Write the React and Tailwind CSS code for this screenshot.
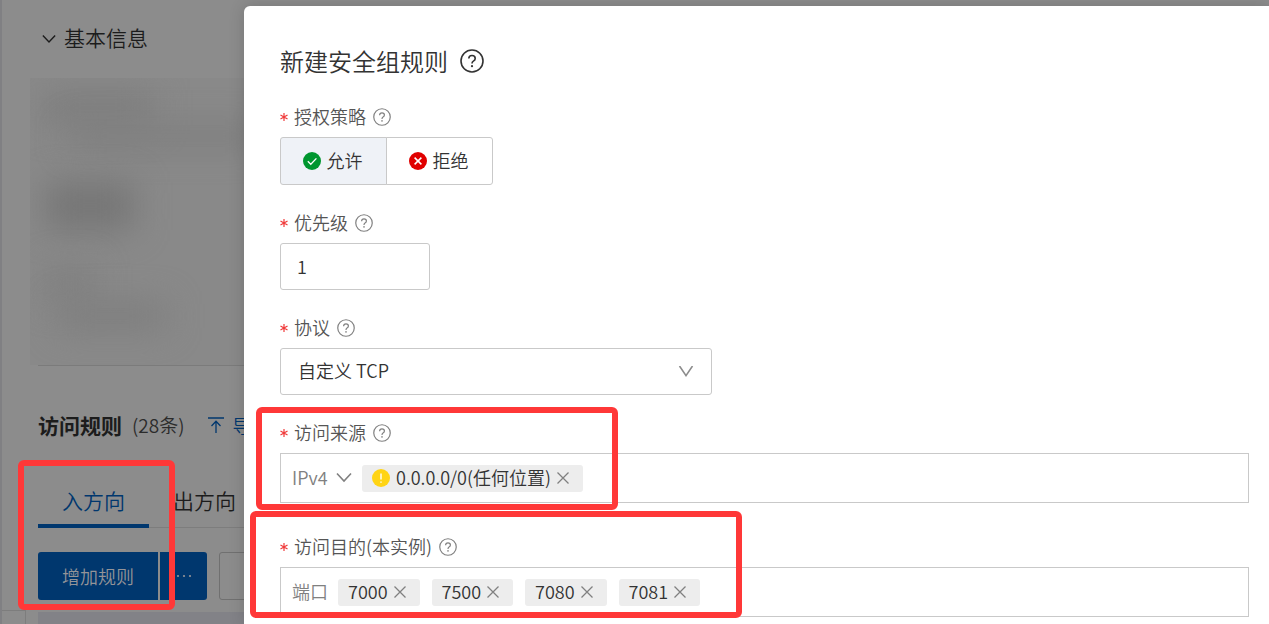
import React, { useState } from "react";

function HelpIcon({ className }) {
  return (
    <svg viewBox="0 0 24 24" fill="none" stroke="currentColor" strokeWidth="1.6" className={className} aria-hidden="true">
      <circle cx="12" cy="12" r="11" />
      <path d="M8.8 9.6c0-1.8 1.4-3.1 3.2-3.1s3.2 1.2 3.2 2.9c0 1.3-.8 2.1-1.8 2.7-1 .6-1.4 1.2-1.4 2.4" />
      <circle cx="12" cy="17.2" r="1.1" fill="currentColor" stroke="none" />
    </svg>
  );
}

function Chevron({ className, d = "M1 1.5 8 9 15 1.5" }) {
  return (
    <svg viewBox="0 0 16 11" fill="none" stroke="currentColor" strokeWidth="1.6" className={className} aria-hidden="true">
      <path d={d} />
    </svg>
  );
}

function CheckBadge() {
  return (
    <svg viewBox="0 0 18 18" className="size-[18px]" aria-hidden="true">
      <circle cx="9" cy="9" r="9" fill="#00962f" />
      <path d="M4.8 9.2 7.8 12.2 13.4 6.4" fill="none" stroke="#fff" strokeWidth="1.3" />
    </svg>
  );
}

function CrossBadge() {
  return (
    <svg viewBox="0 0 18 18" className="size-[18px]" aria-hidden="true">
      <circle cx="9" cy="9" r="9" fill="#e00000" />
      <path d="M5.6 5.6 12.4 12.4M12.4 5.6 5.6 12.4" fill="none" stroke="#fff" strokeWidth="1.5" />
    </svg>
  );
}

function WarnBadge() {
  return (
    <svg viewBox="0 0 18 18" className="size-[18px]" aria-hidden="true">
      <circle cx="9" cy="9" r="9" fill="#ffd414" />
      <path d="M9 4.4v6.2M9 12.4v1.4" stroke="#fff" strokeWidth="1.4" />
    </svg>
  );
}

function Marker({ className }) {
  return <div className={`pointer-events-none absolute z-10 rounded-md border-6 border-[#ff3838] ${className}`} />;
}

function Label({ htmlFor, id, children }) {
  return (
    <div className="mb-2 flex h-6 items-center text-[18px] leading-6 text-[#555]">
      <svg viewBox="0 0 10 10" className="mr-1.5 size-2 shrink-0 text-[#f03b3b]" fill="none" stroke="currentColor" strokeWidth="1.5" aria-hidden="true">
        <path d="M5 0v10M.6 2.5l8.8 5M9.4 2.5l-8.8 5" />
      </svg>
      <label id={id} htmlFor={htmlFor} className="pb-0.5">{children}</label>
      <HelpIcon className="ml-[7px] size-[18px] text-[#808080]" />
    </div>
  );
}

function Tag({ children, icon, label, onRemove }) {
  return (
    <span className="flex h-[27px] shrink-0 items-center gap-1.5 rounded-[3px] bg-[#ededed] pr-3.5 pl-2.5 text-[18px] leading-6 text-[#333]">
      {icon}
      <span className="pb-0.5">{children}</span>
      <button type="button" aria-label={`删除 ${label}`} onClick={onRemove} className="text-[#808080]">
        <svg viewBox="0 0 12 12" className="size-3" fill="none" stroke="currentColor" strokeWidth="1.3" aria-hidden="true">
          <path d="M.5.5 11.5 11.5M11.5.5.5 11.5" />
        </svg>
      </button>
    </span>
  );
}

function Background() {
  return (
    <section className="relative w-61 shrink-0 overflow-hidden border-l-2 border-[#808083] text-[#1c1c1c]">
      <div className="flex h-[78px] items-center pl-9">
        <h2>
          <button type="button" className="flex items-center gap-2 pl-1 text-[21px] leading-8">
            <Chevron className="h-2.5 w-3.5" />
            <span className="pb-1">基本信息</span>
          </button>
        </h2>
      </div>

      <div className="ml-7 h-[287px] overflow-hidden bg-[#898989] pt-3">
        <div className="ml-3 h-9 w-28 bg-[#7f7f7f] blur-lg" />
        <div className="ml-10 h-5 w-48 bg-[#7d7d7d] blur-lg" />
        <div className="mt-9 ml-4 h-12 w-22 bg-[#767676] blur-lg" />
        <div className="mt-9 ml-4 h-9 w-12 bg-[#808080] blur-lg" />
        <div className="ml-7 h-7 w-27 bg-[#7e7e7e] blur-lg" />
      </div>

      <div className="ml-9 border-t border-[#7b7b7b]">
        <div className="flex h-30 items-center pb-0.5 whitespace-nowrap">
          <h2 className="text-[21px] leading-8 font-bold">访问规则</h2>
          <span className="ml-2.5 text-[19px] text-[#2b2b2b]">(28条)</span>
          <a href="#import" className="ml-6 flex items-center gap-2 text-[18px] text-[#00376e]">
            <svg viewBox="0 0 16 16" className="size-4" fill="none" stroke="currentColor" strokeWidth="1.3" aria-hidden="true">
              <path d="M0 1h16M8 16V4.5M3.5 9 8 4.3 12.5 9" />
            </svg>
            导入
          </a>
        </div>

        <div role="tablist" className="flex h-[42px] border-b border-[#7d7d7d] whitespace-nowrap text-[21px] leading-7">
          <button type="button" role="tab" aria-selected="true" className="-mb-px flex border-b-4 border-[#00376e] px-6 text-[#00376e]">入方向</button>
          <button type="button" role="tab" aria-selected="false" className="flex px-6">出方向</button>
        </div>

        <div className="mt-6 flex h-12 text-[18px] whitespace-nowrap text-[#949498]">
          <button type="button" className="shrink-0 rounded-l-[3px] bg-[#00376e] px-6">增加规则</button>
          <button type="button" aria-label="更多" className="ml-0.5 flex w-[47px] shrink-0 items-center justify-center rounded-r-[3px] bg-[#00376e]">
            <svg viewBox="0 0 16 4" className="h-1 w-4" fill="currentColor" aria-hidden="true">
              <circle cx="2" cy="2" r="1.1" /><circle cx="8" cy="2" r="1.1" /><circle cx="14" cy="2" r="1.1" />
            </svg>
          </button>
          <button type="button" aria-label="快速添加" className="ml-3 w-30 shrink-0 rounded-[3px] border border-[#707070]" />
        </div>
      </div>

      <div className="flex">
        <div className="mt-2.5 h-3.5 w-6 shrink-0 border-t border-r border-[#7d7d7d]" />
        <div className="mt-3 ml-3 h-3 grow bg-[#828287]" />
      </div>

      <Marker className="top-[460px] left-4 h-[150px] w-[157px]" />
    </section>
  );
}

function Choice({ checked, value, onChange, icon, children, className }) {
  return (
    <label className={`flex w-[107px] cursor-pointer items-center justify-center gap-1.5 border border-[#c9c9c9] pr-0.5 text-[18px] leading-6 text-[#333] ${checked ? "bg-[#eff2f7]" : "bg-white"} ${className}`}>
      <input type="radio" name="policy" value={value} checked={checked} onChange={onChange} className="sr-only" />
      {icon}
      <span className="pb-0.5">{children}</span>
    </label>
  );
}

export default function App() {
  const [policy, setPolicy] = useState("allow");
  const [priority, setPriority] = useState("1");
  const [ports, setPorts] = useState(["7000", "7500", "7080", "7081"]);
  const [sources, setSources] = useState(["0.0.0.0/0(任何位置)"]);

  return (
    <div className="flex h-screen overflow-hidden bg-[#8c8c8c] font-['Noto_Sans_CJK_SC',sans-serif] font-[350]">
      <Background />

      <main className="relative mt-1.5 min-w-0 grow rounded-tl-md bg-white pt-[37px] pr-5 pl-9 shadow-[0_0_16px_rgba(0,0,0,0.16)]">
        <div className="mb-[26px] flex h-9 items-center gap-3 text-[#333]">
          <h1 className="text-2xl leading-9">新建安全组规则</h1>
          <HelpIcon className="size-6" />
        </div>

        <form className="flex flex-col gap-[26px]" onSubmit={(e) => e.preventDefault()}>
          <div>
            <Label id="policy-label">授权策略</Label>
            <div role="radiogroup" aria-labelledby="policy-label" className="flex h-12">
              <Choice value="allow" checked={policy === "allow"} onChange={() => setPolicy("allow")} icon={<CheckBadge />} className="rounded-l-[3px]">允许</Choice>
              <Choice value="deny" checked={policy === "deny"} onChange={() => setPolicy("deny")} icon={<CrossBadge />} className="-ml-px rounded-r-[3px]">拒绝</Choice>
            </div>
          </div>

          <div>
            <Label htmlFor="priority">优先级</Label>
            <input id="priority" value={priority} onChange={(e) => setPriority(e.target.value)} className="block h-[47px] w-[150px] rounded-[3px] border border-[#c9c9c9] px-4 pb-0.5 text-[18px] text-[#333]" />
          </div>

          <div>
            <Label htmlFor="protocol">协议</Label>
            <div className="relative w-[432px]">
              <select id="protocol" className="block h-[47px] w-full appearance-none rounded-[3px] border border-[#c9c9c9] bg-white px-[17px] pb-0.5 text-[18px] text-[#333]">
                <option>自定义 TCP</option>
              </select>
              <Chevron d="M1.5 0 8 9.6 14.5 0" className="pointer-events-none absolute top-[18px] right-[18px] h-[11px] w-4 text-[#8c8c8c]" />
            </div>
          </div>

          <div className="relative">
            <Label id="source-label" htmlFor="source-type">访问来源</Label>
            <div className="flex h-[50px] items-center border border-[#c9c9c9] pl-[11px]">
              <div className="relative mr-2.5 w-15">
                <select id="source-type" className="block w-full appearance-none bg-transparent pb-0.5 text-[18px] text-[#808080]">
                  <option>IPv4</option>
                </select>
                <Chevron className="pointer-events-none absolute top-2 right-0 h-[11px] w-4 text-[#808080]" />
              </div>
              {sources.map((s) => (
                <Tag key={s} label={s} icon={<WarnBadge />} onRemove={() => setSources([])}>{s}</Tag>
              ))}
            </div>
            <Marker className="-top-3.5 -left-6 h-[103px] w-[362px]" />
          </div>

          <div className="relative mt-1.5">
            <Label htmlFor="port-input">访问目的(本实例)</Label>
            <div className="flex h-[50px] items-center gap-3 border border-[#c9c9c9] pl-[11px]">
              <span className="-mr-0.5 pb-0.5 text-[18px] leading-6 text-[#808080]">端口</span>
              {ports.map((p) => (
                <Tag key={p} label={p} onRemove={() => setPorts(ports.filter((x) => x !== p))}>{p}</Tag>
              ))}
              <input id="port-input" className="h-8 min-w-0 grow outline-none" />
            </div>
            <Marker className="-top-6 -left-[30px] h-[107px] w-[492px]" />
          </div>
        </form>
      </main>
    </div>
  );
}
